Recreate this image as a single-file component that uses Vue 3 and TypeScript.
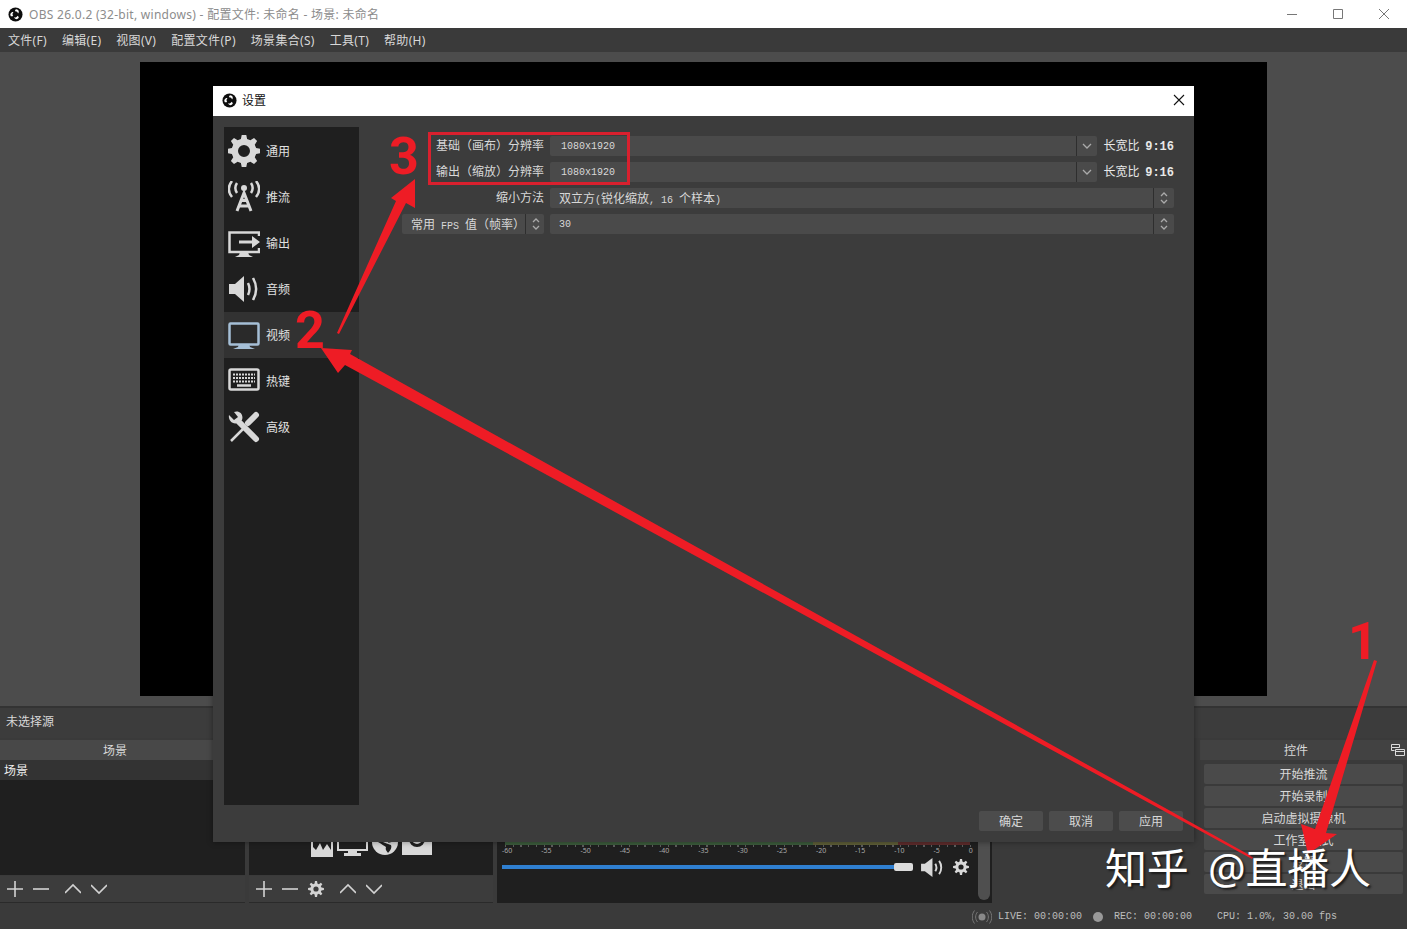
<template>
  <div class="obs">
    <header class="titlebar">
      <svg class="logo" viewBox="0 0 16 16"><use href="#obs-logo" /></svg>
      <span class="title-text">OBS 26.0.2 (32-bit, windows) - 配置文件: 未命名 - 场景: 未命名</span>
      <div class="win-buttons">
        <svg viewBox="0 0 12 12"><path d="M1 6.500h10" /></svg>
        <svg viewBox="0 0 12 12"><path d="M1.500 1.500h9v9h-9z" /></svg>
        <svg viewBox="0 0 12 12"><path d="M1 1l10 10M11 1L1 11" /></svg>
      </div>
    </header>

    <nav class="menubar">
      <span v-for="m in menus" :key="m">{{ m }}</span>
    </nav>

    <section class="preview-area">
      <div class="preview"></div>
    </section>

    <div class="context-bar">未选择源</div>

    <section class="docks">
      <div class="dock scenes">
        <div class="dock-title">场景</div>
        <div class="list">
          <div class="list-row">场景</div>
        </div>
        <div class="toolbar">
          <button class="tool"><svg viewBox="0 0 16 16"><path d="M0 8h16M8 0v16" /></svg></button>
          <button class="tool"><svg viewBox="0 0 16 16"><path d="M0 8h16" /></svg></button>
          <i class="tool-gap"></i>
          <button class="tool"><svg viewBox="0 0 16 16"><path d="M0 12l8-8 8 8" /></svg></button>
          <button class="tool"><svg viewBox="0 0 16 16"><path d="M0 4l8 8 8-8" /></svg></button>
        </div>
      </div>

      <div class="dock sources">
        <div class="dock-title">来源</div>
        <div class="list source-list">
          <div class="source-icons">
            <svg width="22" height="30" viewBox="0 0 22 30"><path class="fill" d="M0 0h22v30H0z" /><path class="cut" d="M2 2h18v21l-4-6-4 6-3-7-4 7-3-3z" /></svg>
            <svg width="31" height="30" viewBox="0 0 31 30"><path class="fill" d="M0 0h31v24H20v2h4v3H7v-3h4v-2H0z" /><path class="cut" d="M2 2h27v20H2z" /></svg>
            <svg width="26" height="30" viewBox="0 0 26 30"><circle class="fill" cx="13" cy="15" r="13" /><path class="cut" d="M6 15c4 2 6 4 8 5-1 3 1 4 2 6 3-3 4-6 3-8-3-1-6-2-8-3zM16 16l7-2 1-3-6 1z" /></svg>
            <svg width="30" height="30" viewBox="0 0 30 30"><path class="fill" d="M0 2h30v26H0z" /><circle class="cut" cx="15" cy="12" r="8" /><circle class="fill" cx="15" cy="12" r="5" /></svg>
          </div>
        </div>
        <div class="toolbar">
          <button class="tool"><svg viewBox="0 0 16 16"><path d="M0 8h16M8 0v16" /></svg></button>
          <button class="tool"><svg viewBox="0 0 16 16"><path d="M0 8h16" /></svg></button>
          <button class="tool"><svg viewBox="0 0 16 16"><path class="fill" fill-rule="evenodd" :d="gearPath(8, 8, 8, 5.600, 2.600)" /></svg></button>
          <i class="tool-gap"></i>
          <button class="tool"><svg viewBox="0 0 16 16"><path d="M0 12l8-8 8 8" /></svg></button>
          <button class="tool"><svg viewBox="0 0 16 16"><path d="M0 4l8 8 8-8" /></svg></button>
        </div>
      </div>

      <div class="mixer">
        <div class="mixer-body">
          <div class="meter">
            <i class="meter-green"></i><i class="meter-yellow"></i><i class="meter-red"></i>
          </div>
          <div class="meter-ticks"></div>
          <div class="meter-scale">
            <span v-for="n in scale" :key="n">{{ n }}</span>
          </div>
          <div class="fader-row">
            <div class="fader"></div>
            <div class="fader-handle"></div>
            <svg class="mixer-icon speaker" viewBox="0 0 24 20">
              <path class="fill" d="M1 6h4l8-6v20l-8-6H1z" />
              <path d="M16 6c1.500 2.500 1.500 5.500 0 8M20 3c3 4 3 10 0 14" />
            </svg>
            <svg class="mixer-icon gear" viewBox="0 0 16 16"><path class="fill" fill-rule="evenodd" :d="gearPath(8, 8, 8, 5.600, 2.600)" /></svg>
          </div>
        </div>
        <div class="mixer-scroll"></div>
      </div>

      <div class="dock controls">
        <div class="dock-title">
          控件
          <svg class="float-icon" viewBox="0 0 14 12"><path d="M.5.500h8v3h-8zM.5 3.500v3h3M4.500 5.500h9v6h-9zM4.500 7.500h9" /></svg>
        </div>
        <div class="control-buttons">
          <button v-for="c in controls" :key="c" class="control">{{ c }}</button>
        </div>
      </div>
    </section>

    <footer class="statusbar">
      <svg class="live-icon" viewBox="0 0 20 14">
        <circle cx="10" cy="7" r="3.500" />
        <path d="M5.500 2c-2.500 3-2.500 7 0 10M14.500 2c2.500 3 2.500 7 0 10M2.500 .5c-3 4-3 9 0 13M17.500 .5c3 4 3 9 0 13" />
      </svg>
      <span class="live">LIVE: 00:00:00</span>
      <i class="rec-dot"></i>
      <span class="rec">REC: 00:00:00</span>
      <span class="cpu">CPU: 1.0%, 30.00 fps</span>
    </footer>

    <!-- settings window -->
    <div class="dialog">
      <div class="dialog-title">
        <svg class="logo" viewBox="0 0 16 16"><use href="#obs-logo" /></svg>
        <span>设置</span>
        <svg class="dialog-close" viewBox="0 0 12 12"><path d="M1 1l10 10M11 1L1 11" /></svg>
      </div>
      <div class="dialog-body">
        <div class="dialog-main">
          <aside class="sidebar">
            <div
              v-for="item in nav"
              :key="item.id"
              :class="['nav-item', { active: item.id === 'video' }]"
            >
              <svg class="nav-icon" viewBox="0 0 32 32">
                <path v-if="item.id === 'general'" class="fill" fill-rule="evenodd" :d="gearPath(16, 16, 16.500, 12.500, 6)" />
                <template v-else-if="item.id === 'stream'">
                  <circle class="fill" cx="16" cy="7" r="3" />
                  <path class="thick" d="M9 2c-2 3-2 7 0 10M23 2c2 3 2 7 0 10M4 0c-4 5-4 11 0 16M28 0c4 5 4 11 0 16" />
                  <path class="thicker" d="M9 30L16 12l7 18M12 25h8M14 19.500h4" />
                </template>
                <template v-else-if="item.id === 'output'">
                  <path class="thick" d="M31 9V5.500H1.500v19.500H31V21" />
                  <path class="fill" d="M12 25h8l1 3 4 2H7l4-2zM11 13.500h13V9l8 6-8 6v-4.500H11z" />
                </template>
                <template v-else-if="item.id === 'audio'">
                  <path class="fill" d="M1 11h6l9-8v26l-9-8H1z" />
                  <path class="thick" d="M20 10c2 4 2 8 0 12M25 5c4 7 4 15 0 22" />
                </template>
                <template v-else-if="item.id === 'video'">
                  <path class="blue-fill" d="M11 25h10l1 3 5 2H5l5-2z" />
                  <rect class="blue" x="1.500" y="4.500" width="29" height="21" rx="1" />
                </template>
                <template v-else-if="item.id === 'hotkeys'">
                  <rect class="thick" x="1.500" y="4.500" width="29" height="20" rx="1.500" />
                  <path class="dots" d="M5 9.500h22M5 13h22M5 16.500h22" />
                  <path class="thick" d="M9 20.500h14" />
                </template>
                <template v-else>
                  <path class="thick" d="M18 15L3 30" />
                  <path class="handle" d="M20 12l8-8" />
                  <path class="handle" d="M11 11l17 17" />
                  <path class="fill" d="M1 4l5 5 4-3-4-5c5-2 10 2 8 8l-4 3C4 14 0 9 1 4z" />
                </template>
              </svg>
              <span>{{ item.label }}</span>
            </div>
          </aside>

          <div class="form">
            <span class="label">基础（画布）分辨率</span>
            <div class="field-row">
              <div class="combo">
                <span class="value res">1080x1920</span>
                <span class="drop"><svg viewBox="0 0 10 6"><path d="M1 1l4 4 4-4" /></svg></span>
              </div>
              <span class="aspect">长宽比 <b>9:16</b></span>
            </div>

            <span class="label">输出（缩放）分辨率</span>
            <div class="field-row">
              <div class="combo">
                <span class="value res">1080x1920</span>
                <span class="drop"><svg viewBox="0 0 10 6"><path d="M1 1l4 4 4-4" /></svg></span>
              </div>
              <span class="aspect">长宽比 <b>9:16</b></span>
            </div>

            <span class="label">缩小方法</span>
            <div class="combo">
              <span class="value">双立方<small>(</small>锐化缩放<small>, 16 </small>个样本<small>)</small></span>
              <span class="drop spin"><svg viewBox="0 0 8 14"><path d="M1 5l3-3 3 3M1 9l3 3 3-3" /></svg></span>
            </div>

            <div class="combo">
              <span class="value">常用<small> FPS </small>值（帧率）</span>
              <span class="drop spin"><svg viewBox="0 0 8 14"><path d="M1 5l3-3 3 3M1 9l3 3 3-3" /></svg></span>
            </div>
            <div class="combo">
              <span class="value"><small>30</small></span>
              <span class="drop spin"><svg viewBox="0 0 8 14"><path d="M1 5l3-3 3 3M1 9l3 3 3-3" /></svg></span>
            </div>
          </div>
        </div>

        <div class="dialog-buttons">
          <button v-for="b in dialogButtons" :key="b" class="dlg-btn">{{ b }}</button>
        </div>
      </div>
    </div>

    <!-- red annotations drawn on top of the screenshot -->
    <svg class="arrows" width="1407" height="929" viewBox="0 0 1407 929">
      <polygon points="321,348 352,350 350,354 1253,857 1252,859 345,365 338,373" />
      <polygon points="415,179 415,208 406,203 339,334 337,333 396,201 391,198" />
      <polygon points="1308,854 1301,824 1315,829 1374,660 1377,661 1326,833 1337,834" />
    </svg>
    <div class="red-box"></div>
    <span class="step step-1">1</span>
    <span class="step step-2">2</span>
    <span class="step step-3">3</span>
    <span class="watermark">知乎 @直播人</span>

    <svg width="0" height="0" class="defs">
      <defs>
        <g id="obs-logo">
          <circle cx="8" cy="8" r="7.500" fill="#0d0d0d" />
          <path fill="#fff" d="M8.500 2.300c2 0 3 1.200 3 2.700 0 .8-.3 1.300-.8 1.800-.4-1.500-1.700-2.400-3.300-2.200.3-1.200.3-1.800 1.100-2.300zM3 9.800c-1-1.700-.5-3.200.8-4 .7-.4 1.300-.4 2-.3C4.700 6.600 4.500 8.200 5.500 9.500c-1.200.4-1.700.7-2.500.3zM11.500 11.300c-1 1.700-2.500 2-3.800 1.300-.7-.4-1-.9-1.200-1.600 1.500.4 3-.3 3.700-1.800.9.900 1.400 1.200 1.300 2.100z" />
        </g>
      </defs>
    </svg>
  </div>
</template>

<script setup lang="ts">
interface NavItem {
  id: string
  label: string
}

const menus = ['文件(F)', '编辑(E)', '视图(V)', '配置文件(P)', '场景集合(S)', '工具(T)', '帮助(H)']

const nav: NavItem[] = [
  { id: 'general', label: '通用' },
  { id: 'stream', label: '推流' },
  { id: 'output', label: '输出' },
  { id: 'audio', label: '音频' },
  { id: 'video', label: '视频' },
  { id: 'hotkeys', label: '热键' },
  { id: 'advanced', label: '高级' }
]

const controls = ['开始推流', '开始录制', '启动虚拟摄像机', '工作室模式', '设置', '退出']
const dialogButtons = ['确定', '取消', '应用']
const scale = [-60, -55, -50, -45, -40, -35, -30, -25, -20, -15, -10, -5, 0]

// gear outline with a round hole, used in a few places
function gearPath(cx: number, cy: number, outer: number, inner: number, hole: number): string {
  const teeth = 8
  const pts: string[] = []
  for (let i = 0; i < teeth; i++) {
    const a = (i / teeth) * Math.PI * 2
    const step = (Math.PI * 2) / teeth
    const corners: [number, number][] = [
      [inner, a - step * 0.32],
      [outer, a - step * 0.17],
      [outer, a + step * 0.17],
      [inner, a + step * 0.32]
    ]
    for (const [r, t] of corners) {
      pts.push(`${(cx + r * Math.cos(t)).toFixed(2)} ${(cy + r * Math.sin(t)).toFixed(2)}`)
    }
  }
  return `M${pts.join('L')}Z M${cx - hole} ${cy}a${hole} ${hole} 0 1 0 ${hole * 2} 0a${hole} ${hole} 0 1 0 ${-hole * 2} 0Z`
}
</script>

<style scoped>
.obs {
  position: relative;
  width: 1407px;
  height: 929px;
  overflow: hidden;
  display: flex;
  flex-direction: column;
  background: #3a3a3a;
  color: #d8d8d8;
  font: 12px "Noto Sans", "Noto Sans CJK SC", sans-serif;
}

.defs {
  position: absolute;
}

.titlebar {
  height: 28px;
  flex-shrink: 0;
  display: flex;
  align-items: center;
  padding-left: 8px;
  background: #fff;
  color: #8c8c8c;
}

.logo {
  width: 15px;
  height: 15px;
  flex-shrink: 0;
}

.title-text {
  margin-left: 6px;
  letter-spacing: 0.28px;
}

.win-buttons {
  margin-left: auto;
  display: flex;
  gap: 34px;
  padding-right: 17px;
}

.win-buttons svg {
  width: 12px;
  height: 12px;
  fill: none;
  stroke: #777;
}

.menubar {
  height: 24px;
  flex-shrink: 0;
  display: flex;
  align-items: center;
  gap: 15px;
  padding-left: 8px;
  letter-spacing: 0.3px;
  background: #3a3a3a;
}

.preview-area {
  height: 654px;
  flex-shrink: 0;
  display: flex;
  justify-content: center;
  padding-top: 10px;
  box-sizing: border-box;
  background: #4c4c4c;
}

.preview {
  width: 1127px;
  height: 634px;
  background: #000;
}

.context-bar {
  height: 32px;
  flex-shrink: 0;
  display: flex;
  align-items: center;
  padding: 0 0 5px 6px;
  background: #3c3c3c;
  border-top: 2px solid #333;
  box-sizing: border-box;
}

.docks {
  height: 165px;
  flex-shrink: 0;
  display: flex;
  gap: 4px;
  padding-top: 2px;
  box-sizing: border-box;
}

.dock {
  display: flex;
  flex-direction: column;
  width: 245px;
  flex-shrink: 0;
}

.sources {
  width: 244px;
}

.dock-title {
  position: relative;
  height: 20px;
  flex-shrink: 0;
  text-align: center;
  line-height: 22px;
  padding-right: 15px;
  background: #484848;
}

.list {
  flex: 1;
  background: #1f1f1f;
}

.list-row {
  height: 20px;
  line-height: 22px;
  padding-left: 4px;
  color: #eee;
  background: #333;
}

.source-list {
  display: flex;
  flex-direction: column;
  justify-content: flex-end;
  align-items: flex-start;
  padding: 0 0 18px 62px;
  box-sizing: border-box;
}

.source-icons {
  display: flex;
  gap: 4px;
  height: 30px;
  align-items: flex-end;
}

.source-icons .fill {
  fill: #d8d8d8;
}

.source-icons .cut {
  fill: #1f1f1f;
}

.toolbar {
  height: 27px;
  margin-top: 1px;
  flex-shrink: 0;
  display: flex;
  align-items: center;
  padding-left: 2px;
  background: #3c3c3c;
  border-bottom: 1px solid #2a2a2a;
  box-sizing: border-box;
}

.tool {
  width: 26px;
  height: 26px;
  padding: 5px;
  border: 0;
  background: none;
}

.tool svg {
  display: block;
  width: 16px;
  height: 16px;
  fill: none;
  stroke: #d2d2d2;
  stroke-width: 1.600;
}

.tool .fill {
  fill: #d2d2d2;
  stroke: none;
}

.tool-gap {
  width: 6px;
}

.mixer {
  width: 495px;
  flex-shrink: 0;
  display: flex;
  align-items: stretch;
  height: 163px;
  background: #1f1f1f;
}

.mixer-body {
  flex: 1;
  display: flex;
  flex-direction: column;
  justify-content: flex-end;
  padding: 0 8px 27px 5px;
  min-width: 0;
}

.meter {
  display: flex;
  height: 3px;
  margin-left: 3px;
}

.meter i {
  display: block;
  height: 100%;
}

.meter-green {
  width: 311px;
  background: #3c5c3c;
}

.meter-yellow {
  width: 86px;
  background: #5f5f38;
}

.meter-red {
  width: 73px;
  background: #5f2c2c;
}

.meter-ticks {
  height: 2px;
  margin-left: 3px;
  width: 470px;
  background: repeating-linear-gradient(90deg, #5e5e5e 0 1px, transparent 1px 7.750px);
}

.meter-scale {
  display: flex;
  justify-content: space-between;
  width: 471px;
  height: 8px;
  color: #aaa;
  font-size: 7px;
  line-height: 8px;
}

.fader-row {
  display: flex;
  align-items: center;
  height: 18px;
  margin-top: 3px;
}

.fader {
  width: 393px;
  height: 4px;
  margin-right: -1px;
  background: #2f7fd0;
}

.fader-handle {
  width: 19px;
  height: 8px;
  border-radius: 2px;
  background: #dcdcdc;
}

.mixer-icon {
  flex-shrink: 0;
  fill: none;
  stroke: #d8d8d8;
  stroke-width: 2;
}

.mixer-icon .fill {
  fill: #d8d8d8;
  stroke: none;
}

.speaker {
  width: 23px;
  height: 19px;
  margin-left: 7px;
}

.gear {
  width: 16px;
  height: 16px;
  margin-left: 10px;
}

.mixer-scroll {
  width: 12px;
  margin-right: 2px;
  flex-shrink: 0;
  margin-bottom: 3px;
  border-radius: 0 0 6px 6px;
  background: #4f4f4f;
}

.controls {
  width: 207px;
  margin-left: 204px;
}

.controls .dock-title {
  padding-right: 15px;
  background: #424242;
}

.float-icon {
  position: absolute;
  right: 2px;
  top: 4px;
  width: 14px;
  height: 12px;
  fill: none;
  stroke: #ddd;
}

.control-buttons {
  display: flex;
  flex-direction: column;
  gap: 2px;
  padding: 4px 4px 0;
}

.control {
  height: 20px;
  padding: 0;
  border: 0;
  border-radius: 2px;
  color: #d8d8d8;
  font: inherit;
  background: #4a4a4a;
}

.statusbar {
  flex: 1;
  display: flex;
  align-items: center;
  justify-content: flex-end;
  padding: 1px 70px 0 0;
  color: #bdbdbd;
  font: 10px "Liberation Mono", "Noto Sans CJK SC", monospace;
}

.live-icon {
  width: 20px;
  height: 14px;
  margin-right: 6px;
  fill: none;
  stroke: #777;
}

.live-icon circle {
  fill: #888;
  stroke: none;
}

.rec-dot {
  width: 10px;
  height: 10px;
  margin: 0 11px;
  border-radius: 50%;
  background: #999;
}

.cpu {
  margin-left: 25px;
}

.dialog {
  position: absolute;
  left: 213px;
  top: 86px;
  width: 981px;
  height: 756px;
  display: flex;
  flex-direction: column;
  background: #3c3c3c;
  box-shadow: 0 0 6px rgba(0, 0, 0, 0.4);
}

.dialog-title {
  height: 30px;
  flex-shrink: 0;
  display: flex;
  align-items: center;
  gap: 5px;
  padding: 0 9px 2px;
  box-sizing: border-box;
  color: #111;
  background: #fff;
}

.dialog-close {
  width: 12px;
  height: 12px;
  margin-left: auto;
  fill: none;
  stroke: #111;
  stroke-width: 1.100;
}

.dialog-body {
  flex: 1;
  display: flex;
  flex-direction: column;
  gap: 6px;
  padding: 11px;
  min-height: 0;
}

.dialog-main {
  flex: 1;
  display: flex;
  min-height: 0;
}

.sidebar {
  width: 135px;
  flex-shrink: 0;
  padding-top: 1px;
  box-sizing: border-box;
  background: #1f1f1f;
}

.nav-item {
  height: 46px;
  display: flex;
  align-items: center;
  gap: 6px;
  padding-left: 4px;
  color: #e0e0e0;
}

.nav-item.active {
  background: #323232;
}

.nav-icon {
  width: 32px;
  height: 32px;
  flex-shrink: 0;
  fill: none;
}

.nav-icon .fill {
  fill: #d8d8d8;
}

.nav-icon .thick {
  stroke: #d8d8d8;
  stroke-width: 2.500;
  fill: none;
}

.nav-icon .thicker {
  stroke: #d8d8d8;
  stroke-width: 3;
  fill: none;
}

.nav-icon .handle {
  stroke: #d8d8d8;
  stroke-width: 6;
  stroke-linecap: round;
  fill: none;
}

.nav-icon .blue {
  stroke: #a5bfd6;
  stroke-width: 2.500;
  fill: #2a2a2a;
}

.nav-icon .blue-fill {
  fill: #a5bfd6;
}

.nav-icon .dots {
  stroke: #d8d8d8;
  stroke-width: 2.200;
  stroke-dasharray: 2 1;
}

.form {
  flex: 1;
  display: grid;
  grid-template-columns: 142px 1fr;
  grid-auto-rows: 20px;
  column-gap: 6px;
  row-gap: 6px;
  align-content: start;
  margin: 9px 9px 0 43px;
  font: 12px "Liberation Mono", "Noto Sans CJK SC", monospace;
}

.form small {
  font-size: 10px;
}

.label {
  text-align: right;
  line-height: 20px;
  padding-top: 1px;
}

.field-row {
  display: flex;
  align-items: center;
  min-width: 0;
}

.field-row .combo {
  flex: 1;
}

.aspect {
  width: 77px;
  flex-shrink: 0;
  padding-bottom: 3px;
  text-align: right;
  color: #e8e8e8;
  white-space: nowrap;
  word-spacing: -1.500px;
}

.combo {
  height: 20px;
  display: flex;
  align-items: center;
  min-width: 0;
  background: #4a4a4a;
  border-radius: 2px;
}

.value {
  flex: 1;
  padding-left: 9px;
  white-space: nowrap;
}

.res {
  padding-left: 11px;
  font-size: 10px;
}

.drop {
  width: 20px;
  height: 100%;
  flex-shrink: 0;
  display: flex;
  align-items: center;
  justify-content: center;
  border-left: 1px solid #2e2e2e;
}

.drop svg {
  width: 10px;
  height: 6px;
  fill: none;
  stroke: #aaa;
  stroke-width: 1.300;
}

.spin svg {
  width: 8px;
  height: 14px;
}

.dialog-buttons {
  flex-shrink: 0;
  display: flex;
  justify-content: flex-end;
  gap: 6px;
}

.dlg-btn {
  width: 64px;
  height: 20px;
  padding: 0;
  border: 0;
  border-radius: 2px;
  color: #d8d8d8;
  font: inherit;
  background: #4c4c4c;
}

.arrows {
  position: absolute;
  left: 0;
  top: 0;
  fill: #ee1c25;
  pointer-events: none;
}

.red-box {
  position: absolute;
  left: 428px;
  top: 132px;
  width: 202px;
  height: 53px;
  box-sizing: border-box;
  border: 3px solid #d9202e;
}

.step {
  position: absolute;
  color: #ee1c25;
  font: 700 52px/1 Roboto, "Liberation Sans", sans-serif;
}

.step-1 {
  left: 1348px;
  top: 616px;
}

.step-2 {
  left: 295px;
  top: 305px;
}

.step-3 {
  left: 389px;
  top: 131px;
}

.watermark {
  position: absolute;
  left: 1105px;
  top: 838px;
  color: #fff;
  font: 400 42px/60px "Noto Sans", "Noto Sans CJK SC", sans-serif;
  letter-spacing: -0.3px;
  white-space: nowrap;
  word-spacing: 9px;
  text-shadow: 2px 2px 2px #1c1c1c;
}
</style>

<style>
html,
body {
  margin: 0;
  background: #3a3a3a;
}
</style>
